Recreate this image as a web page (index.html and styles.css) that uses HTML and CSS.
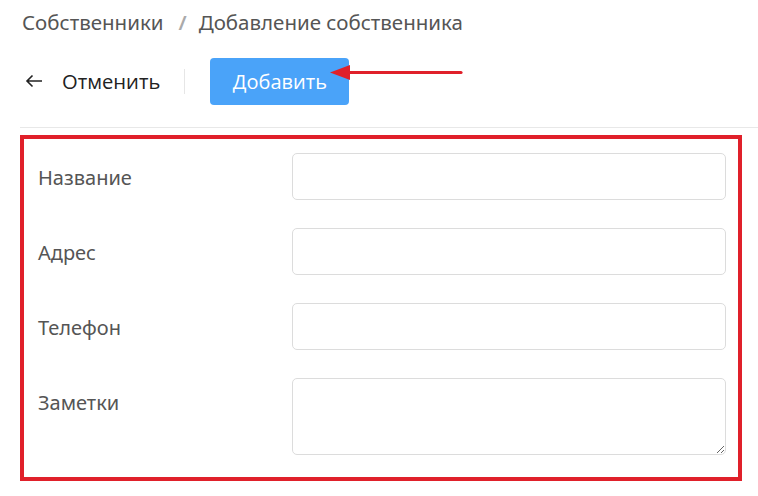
FILE: index.html
```html
<!DOCTYPE html>
<html lang="ru">
<head>
<meta charset="utf-8">
<link rel="stylesheet" href="styles.css">
</head>
<body>
<div class="page">
  <nav class="crumbs">
    <span class="crumb">Собственники</span>
    <span class="slash">/</span>
    <span class="crumb">Добавление собственника</span>
  </nav>
  <div class="toolbar">
    <button class="cancel">
      <svg class="back" width="18" height="14" viewBox="0 0 18 14"><path d="M17 7H2M7.5 1.5L2 7l5.5 5.5" fill="none" stroke="#222" stroke-width="1.6"/></svg>
      <span>Отменить</span>
    </button>
    <span class="sep"></span>
    <button class="add">Добавить</button>
    <svg class="pointer" width="134" height="18" viewBox="0 0 134 18"><path d="M18 7.5H131" stroke="#e0202a" stroke-width="3.2" stroke-linecap="round"/><path d="M0 7.5L20 0V15Z" fill="#e0202a"/></svg>
  </div>
  <div class="rule"></div>
  <form class="form">
    <div class="row">
      <label class="label">Название</label>
      <input class="field" type="text">
    </div>
    <div class="row">
      <label class="label">Адрес</label>
      <input class="field" type="text">
    </div>
    <div class="row">
      <label class="label">Телефон</label>
      <input class="field" type="text">
    </div>
    <div class="row">
      <label class="label">Заметки</label>
      <textarea class="field area"></textarea>
    </div>
  </form>
</div>
</body>
</html>
```

FILE: styles.css
```css
html, body {
  margin: 0;
  padding: 0;
  background: #fff;
}
.page {
  font-family: "Noto Sans", "Open Sans", sans-serif;
  width: 758px;
}
.crumbs {
  display: flex;
  align-items: center;
  height: 44px;
  padding-left: 22px;
  font-size: 20.5px;
  color: #555;
}
.slash {
  color: #aaa;
  margin: 0 12px 0 15px;
  font-weight: 600;
}
.toolbar {
  position: relative;
  display: flex;
  align-items: center;
  height: 48px;
  margin-top: 13px;
  padding-left: 25px;
}
.cancel {
  display: flex;
  align-items: center;
  gap: 19px;
  background: none;
  border: 0;
  padding: 0;
  font-family: "Open Sans", "Noto Sans", sans-serif;
  font-size: 20.2px;
  color: #222;
}
.sep {
  width: 1px;
  height: 25px;
  background: #e6e6e6;
  margin: 0 25px 0 24px;
}
.add {
  height: 47px;
  width: 139px;
  border: 0;
  border-radius: 4px;
  background: #4aa3f9;
  color: #fff;
  font-family: "Open Sans", "Noto Sans", sans-serif;
  font-size: 20px;
  padding: 0;
}
.pointer {
  position: absolute;
  left: 330px;
  top: 8px;
}
.rule {
  margin: 22px 0 0 20px;
  height: 1px;
  background: #e8e8e8;
}
.form {
  margin: 7px 0 0 20px;
  width: 722px;
  box-sizing: border-box;
  border: 4px solid #e0202a;
  padding: 14px 12px 22px 14px;
  display: flex;
  flex-direction: column;
  gap: 28px;
}
.row {
  display: flex;
  align-items: flex-start;
}
.label {
  width: 254px;
  padding-top: 2px;
  line-height: 45px;
  font-size: 20px;
  color: #555;
}
.field {
  width: 434px;
  height: 47px;
  box-sizing: border-box;
  border: 1px solid #dcdcdc;
  border-radius: 5px;
  background: #fff;
  margin: 0;
  font-family: inherit;
}
.area {
  height: 77px;
  resize: vertical;
}
```
